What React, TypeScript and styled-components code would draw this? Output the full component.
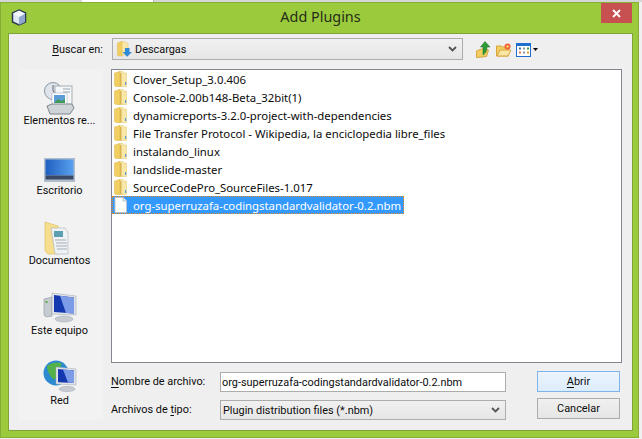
import { createGlobalStyle } from "styled-components";
import styled from "styled-components";

const Global = createGlobalStyle`
  html, body {
    margin: 0;
    padding: 0;
    background: #f0f0f0;
  }
`;

const Page = styled.div`
  width: 642px;
  height: 439px;
  overflow: hidden;
  display: flex;
  flex-direction: column;
  font-family: Roboto, "Noto Sans", sans-serif;
  font-size: 10.9px;
  color: #0c0c0c;
`;

const BackStrip = styled.div`
  height: 2px;
  flex: none;
  background: linear-gradient(
    to right,
    #d4d6d8 82px,
    #fff 82px,
    #fff 153px,
    #9a9a9a 153px,
    #d4d6d8 154px
  );
`;

const Window = styled.div`
  width: 639px;
  height: 436px;
  box-sizing: border-box;
  flex: none;
  background: #9bcb3c;
  border: 1px solid #86ad35;
  display: flex;
  flex-direction: column;
  padding: 0 5px 6px 7px;
`;

const TitleBar = styled.div`
  height: 30px;
  flex: none;
  display: flex;
  align-items: flex-start;
  position: relative;
`;

const AppIcon = styled.svg`
  width: 16px;
  height: 17px;
  margin: 6px 0 0 3px;
`;

const Title = styled.div`
  position: absolute;
  left: 0;
  right: 0;
  top: 4px;
  text-align: center;
  font-family: "Noto Sans", sans-serif;
  font-size: 14.4px;
  color: #262c1a;
`;

const CloseButton = styled.div`
  margin-left: auto;
  margin-right: 1px;
  width: 31px;
  height: 20px;
  background: #c75050;
  display: flex;
  align-items: center;
  justify-content: center;
`;

const Client = styled.div`
  flex: 1;
  background: #efefef;
  border: 1px solid #7fa336;
  padding: 4px 10px 9px 9px;
  display: flex;
  flex-direction: column;
`;

const LookRow = styled.div`
  display: flex;
  align-items: center;
  height: 22px;
  margin-bottom: 9px;
`;

const LookLabel = styled.label`
  width: 94px;
  padding-right: 9px;
  box-sizing: border-box;
  text-align: right;
`;

const Underlined = styled.span`
  text-decoration: underline;
  text-underline-offset: 2px;
`;

const Combo = styled.div<{ $w: number; $h: number; $pad: number }>`
  width: ${(p) => p.$w}px;
  height: ${(p) => p.$h}px;
  box-sizing: border-box;
  border: 1px solid #acacac;
  background: linear-gradient(#f0f0f0, #e6e6e6);
  display: flex;
  align-items: center;
  padding: 0 5px 0 ${(p) => p.$pad}px;
  gap: 2px;
  align-self: end;
`;

const ComboText = styled.span`
  flex: 1;
  white-space: nowrap;
`;

const Tools = styled.div`
  display: flex;
  align-items: center;
  gap: 5px;
  margin-left: 13px;
`;

const ToolIcon = styled.svg`
  width: 15px;
  height: 17px;
`;

const ViewArrow = styled.svg`
  width: 5px;
  height: 3px;
  margin-left: -3px;
`;

const Middle = styled.div`
  display: flex;
  height: 351px;
`;

const Places = styled.nav`
  width: 85px;
  flex: none;
  background: #f2f2f2;
  display: flex;
  flex-direction: column;
  align-items: center;
  padding: 13px 2px 0 0;
  box-sizing: border-box;
  gap: 24px;
`;

const Place = styled.div`
  height: 46px;
  width: 100%;
  display: flex;
  flex-direction: column;
  align-items: center;
  line-height: 14px;
  white-space: nowrap;
`;

const PlaceIcon = styled.svg`
  width: 36px;
  height: 32px;
  flex: none;
  overflow: visible;
`;

const Right = styled.div`
  margin-left: 8px;
  flex: 1;
  display: flex;
  flex-direction: column;
`;

const FileList = styled.div`
  height: 294px;
  flex: none;
  box-sizing: border-box;
  border: 1px solid #828790;
  background: #fff;
  font-family: "Noto Sans", sans-serif;
  font-size: 11.35px;
`;

const FileRow = styled.div<{ $selected?: boolean }>`
  height: 18px;
  display: flex;
  align-items: center;
  gap: 6px;
  padding-left: 2px;
  box-sizing: border-box;
  width: ${(p) => (p.$selected ? "292px" : "auto")};
  background: ${(p) => (p.$selected ? "#3399ff" : "transparent")};
  color: ${(p) => (p.$selected ? "#fff" : "inherit")};
  outline: ${(p) => (p.$selected ? "1px dotted #e8862a" : "none")};
  outline-offset: -1px;
  white-space: nowrap;
`;

const Bottom = styled.div`
  display: grid;
  grid-template-columns: 109px 286px 31px 83px;
  grid-template-rows: 21px 22px;
  row-gap: 6px;
  margin-top: 8px;
  align-items: center;
`;

const Field = styled.div`
  height: 20px;
  box-sizing: border-box;
  border: 1px solid #acacac;
  background: #fff;
  padding: 0 1px;
  display: flex;
  align-items: center;
  white-space: nowrap;
  align-self: end;
`;

const Button = styled.button<{ $primary?: boolean }>`
  grid-column: 4;
  width: 83px;
  height: 21px;
  padding: 0;
  box-sizing: border-box;
  font: inherit;
  color: inherit;
  align-self: start;
  border: 1px solid ${(p) => (p.$primary ? "#7eb4ea" : "#acacac")};
  background: ${(p) =>
    p.$primary ? "linear-gradient(#ecf4fc, #dcecfc)" : "linear-gradient(#f0f0f0, #e5e5e5)"};
`;

const Chevron = () => (
  <svg width="9" height="6" viewBox="0 0 9 6">
    <path d="M1 1l3.500 3.500L8 1" fill="none" stroke="#555" strokeWidth="1.800" />
  </svg>
);

const Folder = () => (
  <svg width="13" height="16" viewBox="0 0 13 16" style={{ flex: "none" }}>
    <path d="M5 .5h4l1 1.500h2.500v13.500H5z" fill="#f8e7a6" stroke="#e2c66e" strokeWidth=".5" />
    <path d="M.5 2L6 .5v15H1.500l-1-1z" fill="#f2cf62" stroke="#dcb44c" strokeWidth=".5" />
    <rect x="6" y="2" width="1.500" height="13.500" fill="#d9b552" />
    <rect x="11" y="11" width="1.200" height="3" fill="#5c9dd6" />
  </svg>
);

const FileGlyph = () => (
  <svg width="13" height="16" viewBox="0 0 13 16" style={{ flex: "none" }}>
    <path d="M1 .5h8l3.500 3.500v11.500H1z" fill="#fff" stroke="#b9c3cf" />
    <path d="M9 .5V4h3.500" fill="#e8eef4" stroke="#b9c3cf" />
  </svg>
);

const files = [
  "Clover_Setup_3.0.406",
  "Console-2.00b148-Beta_32bit(1)",
  "dynamicreports-3.2.0-project-with-dependencies",
  "File Transfer Protocol - Wikipedia, la enciclopedia libre_files",
  "instalando_linux",
  "landslide-master",
  "SourceCodePro_SourceFiles-1.017",
];

function App() {
  return (
    <Page>
      <Global />
      <BackStrip />
      <Window>
        <TitleBar>
          <AppIcon viewBox="0 0 16 17">
            <path d="M8 1l6.500 3v9L8 16l-6.500-3V4z" fill="#dfe8f2" stroke="#2d3a55" strokeWidth="1.500" />
            <path d="M8 8l6-3.500V13l-6 3z" fill="#8fa8cc" />
            <path d="M8 8L2 4.500 8 1.500l6 3z" fill="#f4f7fb" />
          </AppIcon>
          <Title>Add Plugins</Title>
          <CloseButton>
            <svg width="9" height="9" viewBox="0 0 9 9">
              <path d="M1 1l7 7M8 1L1 8" stroke="#fff" strokeWidth="1.800" />
            </svg>
          </CloseButton>
        </TitleBar>
        <Client>
          <LookRow>
            <LookLabel>
              <Underlined>B</Underlined>uscar en:
            </LookLabel>
            <Combo $w={351} $h={22} $pad={4}>
              <svg width="16" height="16" viewBox="0 0 16 16">
                <path d="M4 .5h4l1 1.500h2v12H4z" fill="#f8e7a6" stroke="#e2c66e" strokeWidth=".5" />
                <path d="M.5 2L5 .5V15H1.500l-1-1z" fill="#f2cf62" stroke="#dcb44c" strokeWidth=".5" />
                <path d="M8 7h4.500v4H15l-4.800 4.800L5.500 11H8z" fill="#2f8ad8" />
              </svg>
              <ComboText>Descargas</ComboText>
              <Chevron />
            </Combo>
            <Tools>
              <ToolIcon viewBox="0 0 15 17">
                <path d="M.5 10l5-2 7 1-2 6.500-10 1z" fill="#f2cf62" stroke="#d8a53c" />
                <path d="M7 14V6H4.500L9 .5 14 6h-3c0 3-1 6-4 8z" fill="#2f9a35" stroke="#1c6e22" strokeWidth=".5" />
              </ToolIcon>
              <ToolIcon viewBox="0 0 15 17">
                <path d="M.5 5h5l1 1h6v9H.5z" fill="#f0cf63" stroke="#d8a53c" />
                <path d="M1 15l3-6h11l-3 6z" fill="#f9e6a5" stroke="#d8a53c" />
                <circle cx="11.500" cy="5.500" r="3" fill="#f0603a" />
                <circle cx="11.500" cy="5.500" r="1.200" fill="#fbd06a" />
              </ToolIcon>
              <ToolIcon viewBox="0 0 15 17">
                <rect x=".5" y="2.500" width="14" height="13" fill="#fff" stroke="#1f6fd0" />
                <rect x="0" y="2" width="15" height="3" fill="#1f6fd0" />
                <rect x="3" y="6.500" width="2" height="2" fill="#4a6fa5" />
                <rect x="7" y="6.500" width="2" height="2" fill="#8a97a8" />
                <rect x="11" y="6.500" width="2" height="2" fill="#3d9a4a" />
                <rect x="3" y="10.500" width="2" height="2" fill="#e0734a" />
                <rect x="7" y="10.500" width="2" height="2" fill="#8a97a8" />
                <rect x="11" y="10.500" width="2" height="2" fill="#e0a030" />
              </ToolIcon>
              <ViewArrow viewBox="0 0 5 3">
                <path d="M0 0h5L2.500 3z" fill="#000" />
              </ViewArrow>
            </Tools>
          </LookRow>
          <Middle>
            <Places>
              <Place>
                <PlaceIcon viewBox="0 0 36 32">
                  <circle cx="11" cy="9" r="8.500" fill="#dfe5ea" stroke="#8b98a5" />
                  <path d="M11 3v6l3 2" fill="none" stroke="#667" />
                  <rect x="13" y="4" width="17" height="19" fill="#f4f6f8" stroke="#a5adb5" />
                  <path d="M21 7h7M21 10h7" stroke="#9aa5b0" />
                  <rect x="10" y="11" width="15" height="13" fill="#fff" stroke="#9aa5b0" strokeWidth=".5" />
                  <rect x="12" y="13" width="11" height="8" fill="#5d9bd5" />
                  <path d="M12 21l4-4 3 2 4-2v4z" fill="#3f9a5a" />
                  <path d="M5 24l5-2h20l2 4-4 6H8z" fill="#cfd4d8" stroke="#7d858c" />
                </PlaceIcon>
                Elementos re...
              </Place>
              <Place>
                <PlaceIcon viewBox="0 0 36 32">
                  <defs>
                    <linearGradient id="desk" x1="0" y1="0" x2="1" y2="0">
                      <stop offset="0" stopColor="#1f5fc0" />
                      <stop offset="1" stopColor="#5aa0ee" />
                    </linearGradient>
                  </defs>
                  <rect x="2" y="6" width="31" height="24" fill="#aebccb" />
                  <rect x="3.500" y="7.500" width="28" height="16" fill="url(#desk)" />
                  <rect x="3.500" y="23.500" width="28" height="4" fill="#3a4a66" />
                </PlaceIcon>
                Escritorio
              </Place>
              <Place>
                <PlaceIcon viewBox="0 0 36 32">
                  <path d="M3 0l13 4v28H6l-3-3z" fill="#f6de8e" stroke="#d8b045" strokeWidth=".5" />
                  <path d="M9 6h14l3 4v22H13z" fill="#eef2f5" stroke="#9aa5ad" strokeWidth=".5" />
                  <rect x="12" y="9" width="9" height="6" fill="#5aa0b0" />
                  <path d="M13 18h11M14 21h11M14 24h11M15 27h10" stroke="#a5adb5" />
                </PlaceIcon>
                Documentos
              </Place>
              <Place>
                <PlaceIcon viewBox="0 0 36 32">
                  <path d="M2 7l8-2v19l-6 1-2-2z" fill="#c5cbd1" stroke="#7d858c" strokeWidth=".5" />
                  <rect x="3.500" y="9" width="2" height="2" fill="#53b04a" />
                  <path d="M10 1l24 3v19l-24-1z" fill="#e0e4e8" stroke="#9aa5ad" strokeWidth=".5" />
                  <path d="M12 3l20 2.500v16L12 20z" fill="#1338b0" />
                  <path d="M18 3.800l14 1.700v16l-8-.6z" fill="#7d9ce8" />
                  <ellipse cx="22" cy="27" rx="9" ry="3" fill="#c5cbd1" stroke="#9aa5ad" strokeWidth=".5" />
                </PlaceIcon>
                Este equipo
              </Place>
              <Place>
                <PlaceIcon viewBox="0 0 36 32">
                  <circle cx="14" cy="11" r="12.500" fill="#2b8ad0" />
                  <path d="M5 4c5-4 10-4 14-3 2 3-3 5-3 9s-3 9-5 7-6-8-6-13z" fill="#53b04a" />
                  <path d="M14 5l20 2v16l-20-1z" fill="#e0e4e8" stroke="#9aa5ad" strokeWidth=".5" />
                  <path d="M16 7l16 1.500v12.500l-16-.8z" fill="#1338b0" />
                  <path d="M21 7.500l11 1v12.500l-6-.4z" fill="#7d9ce8" />
                  <ellipse cx="25" cy="27" rx="8" ry="2.600" fill="#c5cbd1" stroke="#9aa5ad" strokeWidth=".5" />
                </PlaceIcon>
                Red
              </Place>
            </Places>
            <Right>
              <FileList>
                {files.map((name) => (
                  <FileRow key={name}>
                    <Folder />
                    {name}
                  </FileRow>
                ))}
                <FileRow $selected>
                  <FileGlyph />
                  org-superruzafa-codingstandardvalidator-0.2.nbm
                </FileRow>
              </FileList>
              <Bottom>
                <label>
                  <Underlined>N</Underlined>ombre de archivo:
                </label>
                <Field>org-superruzafa-codingstandardvalidator-0.2.nbm</Field>
                <span />
                <Button $primary>
                  <Underlined>A</Underlined>brir
                </Button>
                <label>
                  Archivos de <Underlined>t</Underlined>ipo:
                </label>
                <Combo $w={286} $h={20} $pad={2}>
                  <ComboText>Plugin distribution files (*.nbm)</ComboText>
                  <Chevron />
                </Combo>
                <span />
                <Button>Cancelar</Button>
              </Bottom>
            </Right>
          </Middle>
        </Client>
      </Window>
    </Page>
  );
}

export default App;
